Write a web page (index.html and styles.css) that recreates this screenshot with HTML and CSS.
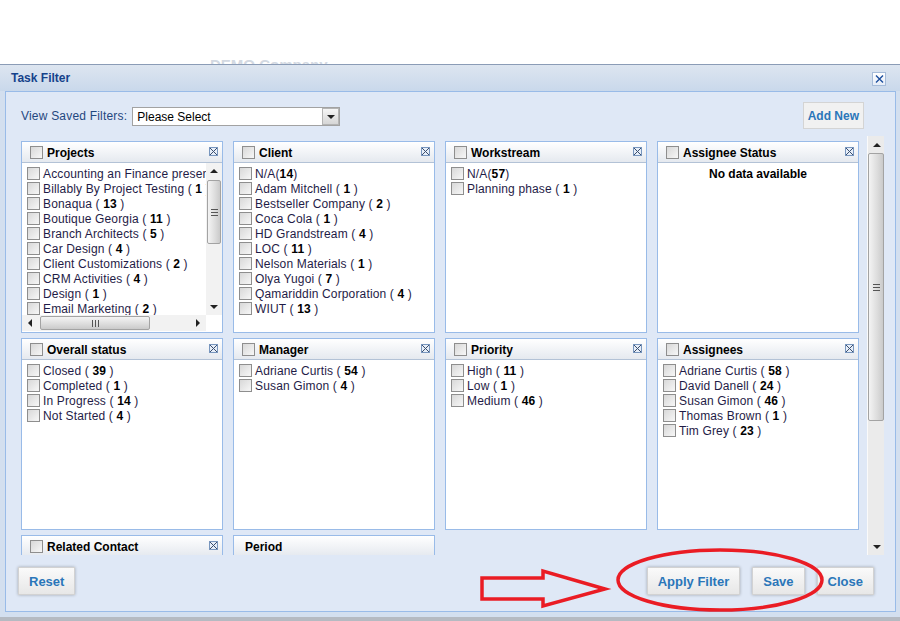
FILE: index.html
```html
<!DOCTYPE html>
<html lang="en">

<head>
  <meta charset="UTF-8" />
  <meta name="viewport" content="width=device-width, initial-scale=1.0" />
  <title>Task Filter</title>
  <link rel="stylesheet" href="styles.css">
</head>

<body>
  <div class="page-top">
    <span class="ghost">DEMO Company</span>
  </div>

  <div class="dialog">
    <div class="dialog-title">
      <span>Task Filter</span>
      <span class="win-close">
        <svg width="11" height="12" viewBox="0 0 11 12"><path d="M2 2.5 L9 9.5 M9 2.5 L2 9.5" stroke="#1d4f9e" stroke-width="1.4" /></svg>
      </span>
    </div>

    <div class="dialog-body">
      <div class="toolbar">
        <span class="saved-label">View Saved Filters:</span>
        <div class="select">
          <span>Please Select</span>
          <span class="select-btn"><i class="tri-down"></i></span>
        </div>
        <button class="btn btn-add">Add New</button>
      </div>

      <div class="scroll-area">
        <div class="panels">

          <div class="panel">
            <div class="panel-head"><i class="cb"></i><span>Projects</span><i class="x-mini"></i></div>
            <div class="panel-body scrolled">
              <div class="list">
                <div class="row"><i class="cb"></i><span>Accounting an Finance presentation ( <b>3</b> )</span></div>
                <div class="row"><i class="cb"></i><span>Billably By Project Testing ( <b>1</b> )</span></div>
                <div class="row"><i class="cb"></i><span>Bonaqua ( <b>13</b> )</span></div>
                <div class="row"><i class="cb"></i><span>Boutique Georgia ( <b>11</b> )</span></div>
                <div class="row"><i class="cb"></i><span>Branch Architects ( <b>5</b> )</span></div>
                <div class="row"><i class="cb"></i><span>Car Design ( <b>4</b> )</span></div>
                <div class="row"><i class="cb"></i><span>Client Customizations ( <b>2</b> )</span></div>
                <div class="row"><i class="cb"></i><span>CRM Activities ( <b>4</b> )</span></div>
                <div class="row"><i class="cb"></i><span>Design ( <b>1</b> )</span></div>
                <div class="row"><i class="cb"></i><span>Email Marketing ( <b>2</b> )</span></div>
                <div class="row"><i class="cb"></i><span>Finance ( <b>3</b> )</span></div>
              </div>
              <div class="sb-v">
                <span class="sb-btn"><i class="tri-up"></i></span>
                <span class="sb-thumb small"><i class="grip"></i></span>
                <span class="sb-track"></span>
                <span class="sb-btn"><i class="tri-down"></i></span>
              </div>
              <div class="sb-h">
                <span class="sb-btn"><i class="tri-left"></i></span>
                <span class="sb-thumb-h"><i class="grip-h"></i></span>
                <span class="sb-track"></span>
                <span class="sb-btn"><i class="tri-right"></i></span>
              </div>
              <div class="sb-corner"></div>
            </div>
          </div>

          <div class="panel">
            <div class="panel-head"><i class="cb"></i><span>Client</span><i class="x-mini"></i></div>
            <div class="panel-body list">
              <div class="row"><i class="cb"></i><span>N/A(<b>14</b>)</span></div>
              <div class="row"><i class="cb"></i><span>Adam Mitchell ( <b>1</b> )</span></div>
              <div class="row"><i class="cb"></i><span>Bestseller Company ( <b>2</b> )</span></div>
              <div class="row"><i class="cb"></i><span>Coca Cola ( <b>1</b> )</span></div>
              <div class="row"><i class="cb"></i><span>HD Grandstream ( <b>4</b> )</span></div>
              <div class="row"><i class="cb"></i><span>LOC ( <b>11</b> )</span></div>
              <div class="row"><i class="cb"></i><span>Nelson Materials ( <b>1</b> )</span></div>
              <div class="row"><i class="cb"></i><span>Olya Yugoi ( <b>7</b> )</span></div>
              <div class="row"><i class="cb"></i><span>Qamariddin Corporation ( <b>4</b> )</span></div>
              <div class="row"><i class="cb"></i><span>WIUT ( <b>13</b> )</span></div>
            </div>
          </div>

          <div class="panel">
            <div class="panel-head"><i class="cb"></i><span>Workstream</span><i class="x-mini"></i></div>
            <div class="panel-body list">
              <div class="row"><i class="cb"></i><span>N/A(<b>57</b>)</span></div>
              <div class="row"><i class="cb"></i><span>Planning phase ( <b>1</b> )</span></div>
            </div>
          </div>

          <div class="panel">
            <div class="panel-head"><i class="cb"></i><span>Assignee Status</span><i class="x-mini"></i></div>
            <div class="panel-body">
              <div class="empty">No data available</div>
            </div>
          </div>

          <div class="panel">
            <div class="panel-head"><i class="cb"></i><span>Overall status</span><i class="x-mini"></i></div>
            <div class="panel-body list">
              <div class="row"><i class="cb"></i><span>Closed ( <b>39</b> )</span></div>
              <div class="row"><i class="cb"></i><span>Completed ( <b>1</b> )</span></div>
              <div class="row"><i class="cb"></i><span>In Progress ( <b>14</b> )</span></div>
              <div class="row"><i class="cb"></i><span>Not Started ( <b>4</b> )</span></div>
            </div>
          </div>

          <div class="panel">
            <div class="panel-head"><i class="cb"></i><span>Manager</span><i class="x-mini"></i></div>
            <div class="panel-body list">
              <div class="row"><i class="cb"></i><span>Adriane Curtis ( <b>54</b> )</span></div>
              <div class="row"><i class="cb"></i><span>Susan Gimon ( <b>4</b> )</span></div>
            </div>
          </div>

          <div class="panel">
            <div class="panel-head"><i class="cb"></i><span>Priority</span><i class="x-mini"></i></div>
            <div class="panel-body list">
              <div class="row"><i class="cb"></i><span>High ( <b>11</b> )</span></div>
              <div class="row"><i class="cb"></i><span>Low ( <b>1</b> )</span></div>
              <div class="row"><i class="cb"></i><span>Medium ( <b>46</b> )</span></div>
            </div>
          </div>

          <div class="panel">
            <div class="panel-head"><i class="cb"></i><span>Assignees</span><i class="x-mini"></i></div>
            <div class="panel-body list">
              <div class="row"><i class="cb"></i><span>Adriane Curtis ( <b>58</b> )</span></div>
              <div class="row"><i class="cb"></i><span>David Danell ( <b>24</b> )</span></div>
              <div class="row"><i class="cb"></i><span>Susan Gimon ( <b>46</b> )</span></div>
              <div class="row"><i class="cb"></i><span>Thomas Brown ( <b>1</b> )</span></div>
              <div class="row"><i class="cb"></i><span>Tim Grey ( <b>23</b> )</span></div>
            </div>
          </div>

          <div class="panel">
            <div class="panel-head"><i class="cb"></i><span>Related Contact</span><i class="x-mini"></i></div>
            <div class="panel-body list"></div>
          </div>

          <div class="panel">
            <div class="panel-head no-cb"><span>Period</span></div>
            <div class="panel-body"></div>
          </div>

        </div>

        <div class="vscroll">
          <span class="sb-btn tall"><i class="tri-up"></i></span>
          <span class="sb-thumb big"><i class="grip"></i></span>
          <span class="sb-track"></span>
          <span class="sb-btn tall"><i class="tri-down"></i></span>
        </div>
      </div>

      <div class="footer">
        <button class="btn">Reset</button>
        <div class="footer-right">
          <button class="btn">Apply Filter</button>
          <button class="btn">Save</button>
          <button class="btn">Close</button>
        </div>
      </div>
    </div>
  </div>

  <div class="page-bottom"></div>

  <!-- red annotation drawn over the screenshot -->
  <svg class="marks" width="900" height="621" viewBox="0 0 900 621">
    <polygon points="482,578 543,578 543,571 605,589 543,606 543,599 482,599" fill="none" stroke="#ea1c24" stroke-width="3.5" stroke-linejoin="miter" />
    <ellipse cx="720" cy="580" rx="102" ry="30" fill="none" stroke="#ea1c24" stroke-width="3.5" />
  </svg>
</body>

</html>
```

FILE: styles.css
```css
* {
  margin: 0;
  padding: 0;
  box-sizing: border-box;
}

body {
  position: relative;
  width: 900px;
  height: 621px;
  overflow: hidden;
  background: #fff;
  font-family: "Liberation Sans", Arial, sans-serif;
  font-size: 12px;
  color: #000;
  display: flex;
  flex-direction: column;
}

.page-top {
  height: 64px;
  flex-shrink: 0;
  overflow: hidden;
  padding: 57px 0 0 210px;
}

.ghost {
  display: block;
  font-size: 15px;
  font-weight: bold;
  line-height: 15px;
  color: #d3d9e2;
}

.dialog {
  height: 553px;
  flex-shrink: 0;
  background: #d3dfef;
  border-top: 1px solid #8b9cb6;
  display: flex;
  flex-direction: column;
}

.dialog-title {
  height: 26px;
  display: flex;
  align-items: center;
  justify-content: space-between;
  padding: 0 14px 0 11px;
  background: linear-gradient(#dde5f0, #c9d8eb);
  font-size: 12px;
  font-weight: bold;
  color: #15428b;
}

.win-close {
  width: 14px;
  height: 14px;
  margin-top: 2px;
  border: 1px solid #a6bcd9;
  background: linear-gradient(#ffffff, #e6edf7);
  display: flex;
  align-items: center;
  justify-content: center;
}

.dialog-body {
  flex: 1;
  margin: 0 4px 5px 5px;
  border: 1px solid #99bbe8;
  background: #dfe8f6;
  padding: 0 11px 0 15px;
  display: flex;
  flex-direction: column;
}

/* saved filter bar */
.toolbar {
  height: 27px;
  margin: 10px 0 7px;
  padding-right: 20px;
  display: flex;
  align-items: center;
}

.saved-label {
  color: #1f477f;
  font-size: 12px;
  letter-spacing: 0.2px;
  margin-right: 5px;
}

.select {
  width: 208px;
  height: 19px;
  margin-top: 2px;
  border: 1px solid #a2a2a2;
  background: #fff;
  display: flex;
  align-items: center;
  justify-content: space-between;
  padding-left: 4px;
}

.select-btn {
  width: 17px;
  height: 17px;
  border: 1px solid #b4b4b4;
  background: linear-gradient(#f6f6f6, #d6d6d6);
  display: flex;
  align-items: center;
  justify-content: center;
}

.btn {
  height: 28px;
  padding: 0 10px;
  font-family: "Liberation Sans", Arial, sans-serif;
  font-size: 13px;
  font-weight: bold;
  color: #2a76b9;
  background: linear-gradient(#fafafa, #e7e7e7);
  border: 1px solid #d2d2d2;
  box-shadow: 0 0 3px rgba(0, 0, 0, 0.28);
}

.btn-add {
  margin-left: auto;
  height: 27px;
  padding: 0 4px;
  font-size: 12px;
  background: #f1f1f1;
  border: 1px solid #d4d4d4;
  box-shadow: none;
}

/* panels */
.scroll-area {
  height: 419px;
  display: flex;
}

.panels {
  flex: 1;
  overflow: hidden;
  padding-top: 5px;
  display: grid;
  grid-template-columns: repeat(4, 202px);
  grid-auto-rows: 192px;
  column-gap: 10px;
  row-gap: 5px;
  align-content: start;
}

.panel {
  border: 1px solid #99bbe8;
  background: #fff;
  display: flex;
  flex-direction: column;
  min-height: 0;
}

.panel-head {
  height: 21px;
  flex-shrink: 0;
  display: flex;
  align-items: center;
  gap: 4px;
  padding: 1px 4px 0 8px;
  border-bottom: 1px solid #b3c2d6;
  background: linear-gradient(#ffffff, #e5e9ef);
  font-weight: bold;
  font-size: 12px;
}

.panel-head.no-cb {
  padding-left: 11px;
}

.panel-head .x-mini {
  margin-left: auto;
  align-self: flex-start;
  margin-top: 4px;
}

.panel-body {
  flex: 1;
  min-height: 0;
  overflow: hidden;
}

.list {
  padding: 3px 0 0 5px;
}

.row {
  height: 15px;
  display: flex;
  align-items: center;
  gap: 3px;
  white-space: pre;
  letter-spacing: 0.15px;
  color: #1f1c47;
}

.row b {
  color: #000;
}

.empty {
  padding-top: 4px;
  text-align: center;
  font-weight: bold;
}

.cb {
  display: block;
  flex-shrink: 0;
  width: 13px;
  height: 13px;
  border: 1px solid #8e8e8e;
  background: linear-gradient(135deg, #d8d8d8, #f7f7f7);
}

.x-mini {
  display: block;
  width: 9px;
  height: 9px;
  border: 1px solid #7896be;
  background:
    linear-gradient(45deg, transparent 44%, #3c4f6e 44%, #3c4f6e 56%, transparent 56%),
    linear-gradient(-45deg, transparent 44%, #3c4f6e 44%, #3c4f6e 56%, transparent 56%),
    #e6eef9;
}

/* projects list with its own scrollbars */
.scrolled {
  display: grid;
  grid-template-columns: 1fr 16px;
  grid-template-rows: 152px 16px;
}

.scrolled .list {
  overflow: hidden;
}

.sb-v,
.vscroll {
  display: flex;
  flex-direction: column;
  background: #f2f2f2;
}

.sb-h {
  display: flex;
  background: #f2f2f2;
}

.sb-corner {
  background: #fff;
}

.sb-btn {
  height: 16px;
  width: 16px;
  flex-shrink: 0;
  display: flex;
  align-items: center;
  justify-content: center;
}

.sb-btn.tall {
  height: 17px;
  width: 17px;
}

.sb-track {
  flex: 1;
}

.sb-thumb {
  margin: 1px 1px 0;
  border: 1px solid #a3a3a3;
  border-radius: 2px;
  background: linear-gradient(90deg, #f4f4f4, #dcdcdc 60%, #cacaca);
  display: flex;
  align-items: center;
  justify-content: center;
}

.sb-thumb.small {
  height: 64px;
}

.sb-thumb.big {
  height: 268px;
}

.sb-thumb-h {
  width: 110px;
  margin: 1px 0 1px 2px;
  border: 1px solid #a3a3a3;
  border-radius: 2px;
  background: linear-gradient(#f4f4f4, #dcdcdc 60%, #cacaca);
  display: flex;
  align-items: center;
  justify-content: center;
}

.grip {
  width: 7px;
  height: 7px;
  background: repeating-linear-gradient(#555 0 1px, transparent 1px 3px);
}

.grip-h {
  width: 7px;
  height: 7px;
  background: repeating-linear-gradient(90deg, #555 0 1px, transparent 1px 3px);
}

.vscroll {
  width: 17px;
  background: #ebebeb;
  border-left: 1px solid #fafafa;
}

.vscroll .sb-thumb {
  margin: 0;
}

.tri-down,
.tri-up {
  width: 0;
  height: 0;
  border-left: 4px solid transparent;
  border-right: 4px solid transparent;
}

.tri-down {
  border-top: 4px solid #222;
}

.tri-up {
  border-bottom: 4px solid #222;
}

.tri-left,
.tri-right {
  width: 0;
  height: 0;
  border-top: 4px solid transparent;
  border-bottom: 4px solid transparent;
}

.tri-left {
  border-right: 4px solid #222;
}

.tri-right {
  border-left: 4px solid #222;
}

/* bottom buttons */
.footer {
  margin: 12px 0 0 -3px;
  padding-right: 10px;
  display: flex;
  justify-content: space-between;
}

.footer-right {
  display: flex;
  gap: 12px;
}

.page-bottom {
  flex: 1;
  background: #b5bac2;
}

.marks {
  position: absolute;
  top: 0;
  left: 0;
  pointer-events: none;
}
```
